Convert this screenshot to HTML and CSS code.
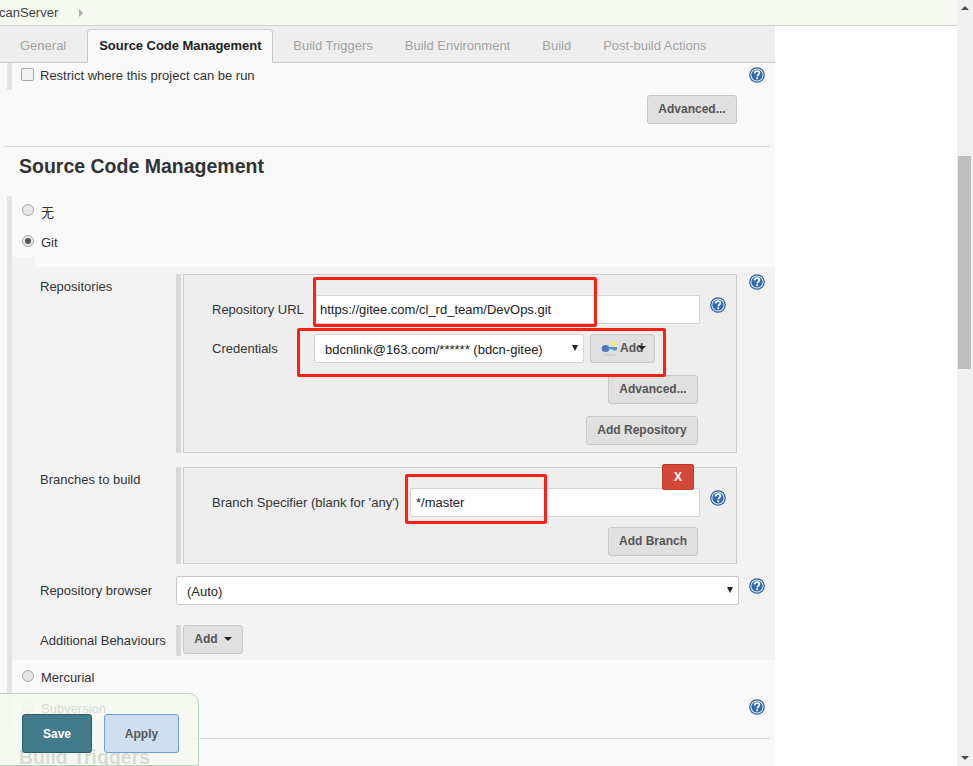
FILE: index.html
```html
<!DOCTYPE html>
<html lang="en">
<head>
  <meta charset="UTF-8">
  <title>canServer Config</title>
  <link rel="stylesheet" href="styles.css">
</head>
<body>
  <svg class="defs" width="0" height="0">
    <symbol id="help" viewBox="0 0 16 16">
      <circle cx="8" cy="8" r="7.8" fill="#2b5c9c"/>
      <circle cx="8" cy="8" r="6.6" fill="#e9f0f8"/>
      <circle cx="8" cy="8" r="5.6" fill="#2f69b0"/>
      <path d="M5.6 6.4c0-1.5 1.1-2.3 2.5-2.3s2.3.8 2.3 2c0 1.7-2.1 1.6-2.1 3.3" fill="none" stroke="#fff" stroke-width="1.7"/>
      <rect x="7.3" y="10.4" width="1.8" height="1.8" fill="#fff"/>
    </symbol>
  </svg>

  <div class="top-bar"><span class="crumb">canServer</span><span class="crumb-arrow"></span></div>

  <div class="page">
    <div class="config">
      <div class="tabs">
        <span class="tab">General</span>
        <span class="tab active">Source Code Management</span>
        <span class="tab">Build Triggers</span>
        <span class="tab">Build Environment</span>
        <span class="tab">Build</span>
        <span class="tab">Post-build Actions</span>
      </div>

      <!-- General (tail end) -->
      <div class="general">
        <div class="restrict">
          <span class="checkbox"></span>
          <span class="opt-label">Restrict where this project can be run</span>
          <svg class="help help-out"><use href="#help"/></svg>
        </div>
        <div class="right-row general-adv"><button class="btn btn-adv">Advanced...</button></div>
      </div>

      <hr class="rule">
      <h2 class="section-title">Source Code Management</h2>

      <div class="scm">
        <div class="radio-row"><span class="radio"></span><span class="opt-label">无</span></div>
        <div class="radio-row row-git"><span class="radio checked"></span><span class="opt-label">Git</span></div>
        <div class="notch"></div>

        <div class="git-block">
          <!-- Repositories -->
          <div class="field-row repo-row">
            <div class="field-label">Repositories</div>
            <div class="box repo-box">
              <div class="inner-row url-row">
                <label class="inner-label">Repository URL</label>
                <div class="input url-input">https://gitee.com/cl_rd_team/DevOps.git</div>
                <svg class="help help-in"><use href="#help"/></svg>
              </div>
              <div class="inner-row cred-row">
                <label class="inner-label">Credentials</label>
                <div class="input select cred-select">bdcnlink@163.com/****** (bdcn-gitee)<span class="caret"></span></div>
                <button class="btn btn-key">
                  <svg class="key" width="18" height="18" viewBox="0 0 18 18">
                    <ellipse cx="9" cy="16" rx="7" ry="1.2" fill="#d2d2d2"/>
                    <ellipse cx="4.5" cy="9.5" rx="3.8" ry="3.6" fill="#4a7ab8"/>
                    <rect x="7" y="8" width="9" height="2.4" fill="#5b8ac6"/>
                    <rect x="12" y="10" width="3.5" height="1.6" fill="#6c96cc"/>
                    <circle cx="13" cy="5" r="2.4" fill="#f6ef5e"/>
                  </svg>Add<span class="menu-caret"></span>
                </button>
              </div>
              <div class="right-row adv-row"><button class="btn btn-adv">Advanced...</button></div>
              <div class="right-row add-repo-row"><button class="btn">Add Repository</button></div>
            </div>
            <svg class="help help-out help-repo"><use href="#help"/></svg>
          </div>

          <!-- Branches -->
          <div class="field-row branch-row">
            <div class="field-label">Branches to build</div>
            <div class="box branch-box">
              <button class="btn-x">X</button>
              <div class="inner-row spec-row">
                <label class="inner-label">Branch Specifier (blank for 'any')</label>
                <div class="input spec-input">*/master</div>
                <svg class="help help-in"><use href="#help"/></svg>
              </div>
              <div class="right-row add-branch-row"><button class="btn btn-adv">Add Branch</button></div>
            </div>
          </div>

          <div class="field-row browser-row">
            <div class="field-label">Repository browser</div>
            <div class="input select browser-select">(Auto)<span class="caret"></span></div>
            <svg class="help help-out help-browser"><use href="#help"/></svg>
          </div>

          <div class="field-row behaviours-row">
            <div class="field-label">Additional Behaviours</div>
            <div class="behaviours"><button class="btn btn-menu">Add<span class="menu-caret"></span></button></div>
          </div>
        </div>

        <div class="radio-row row-hg"><span class="radio"></span><span class="opt-label">Mercurial</span></div>
        <div class="radio-row row-svn"><span class="radio"></span><span class="opt-label">Subversion</span><svg class="help help-out"><use href="#help"/></svg></div>
      </div>

      <hr class="rule rule-low">
      <h2 class="section-title section-low">Build Triggers</h2>

      <!-- red marks drawn over the screenshot -->
      <div class="mark mark-url"></div>
      <div class="mark mark-cred"></div>
      <div class="mark mark-branch"></div>
    </div>

    <div class="side"></div>

    <div class="scrollbar">
      <span class="arrow arrow-up"></span>
      <span class="thumb"></span>
      <span class="arrow arrow-down"></span>
    </div>

    <div class="save-bar">
      <button class="btn-save">Save</button>
      <button class="btn-apply">Apply</button>
    </div>
  </div>
</body>
</html>
```

FILE: styles.css
```css
html, body {
  margin: 0;
  padding: 0;
  height: 766px;
  overflow: hidden;
}

body {
  font-family: "Liberation Sans", Arial, "Noto Sans CJK SC", sans-serif;
  font-size: 13px;
  color: #333;
  background-color: #fff;
}

.defs {
  position: absolute;
}

/* top */
.top-bar {
  width: 957px;
  height: 25px;
  background-color: #f6f9f1;
  border-bottom: 1px solid #d3d3cb;
  display: flex;
  align-items: center;
  color: #444;
  font-size: 13px;
  overflow: hidden;
}

.crumb {
  margin-left: -1px;
}

.crumb-arrow {
  margin-left: 21px;
  border-left: 4px solid #aaa;
  border-top: 4px solid transparent;
  border-bottom: 4px solid transparent;
}

.page {
  display: flex;
  height: 740px;
}

.config {
  position: relative;
  width: 775px;
  height: 740px;
  background-color: #f9f9f9;
  overflow: hidden;
}

.side {
  width: 182px;
  background-color: #fff;
}

/* tabs */
.tabs {
  height: 36px;
  background-color: #eee;
  border-bottom: 1px solid #c8c8c8;
  display: flex;
  align-items: flex-end;
  padding-left: 8px;
}

.tab {
  padding: 0 12px;
  margin-right: 8px;
  height: 33px;
  line-height: 34px;
  color: #a3a3a3;
  font-size: 13px;
}

.tab.active {
  box-sizing: border-box;
  width: 186px;
  height: 34px;
  margin-left: 1px;
  margin-bottom: -1px;
  padding: 0 11px;
  background-color: #f9f9f9;
  border: 1px solid #c8c8c8;
  border-bottom: 1px solid #f9f9f9;
  border-radius: 4px 4px 0 0;
  font-weight: bold;
  color: #222;
  line-height: 32px;
  letter-spacing: -0.05px;
  white-space: nowrap;
}

/* general tail */
.general {
  height: 83px;
}

.restrict {
  display: flex;
  align-items: center;
  height: 27px;
  margin-left: 7px;
  padding-left: 9px;
  padding-bottom: 2px;
  box-sizing: border-box;
  border-left: 5px solid #e4e4e4;
}

.checkbox {
  width: 11px;
  height: 11px;
  background-color: #f2f2f2;
  border: 1px solid #aaa;
  border-radius: 2px;
  margin-right: 6px;
  margin-top: -3px;
}

.opt-label {
  color: #333;
}

.help {
  width: 16px;
  height: 16px;
  display: block;
  flex-shrink: 0;
}

.help-out {
  margin-left: auto;
  margin-right: 10px;
}

.restrict .help-out {
  margin-top: -1px;
}

.right-row {
  display: flex;
  justify-content: flex-end;
}

.general-adv {
  margin-top: 5px;
  padding-right: 38px;
}

/* buttons */
.btn {
  height: 29px;
  padding: 0 11px 2px;
  font-family: inherit;
  font-size: 12px;
  font-weight: bold;
  color: #555;
  background-color: #e0e0e0;
  border: 1px solid #c8c8c8;
  border-radius: 3px;
}

.btn-adv {
  width: 90px;
  padding: 0 0 2px;
}

.rule {
  border: 0;
  border-top: 1px solid #dcdcdc;
  margin: 0 5px 0 4px;
}

.section-title {
  margin: 8px 0 0 19px;
  font-size: 19.5px;
  line-height: 23px;
  color: #333;
}

/* scm */
.scm {
  box-sizing: border-box;
  margin-top: 18px;
  margin-left: 7px;
  padding-top: 4px;
  border-left: 5px solid #e4e4e4;
  height: 528px;
}

.radio-row {
  display: flex;
  align-items: center;
  height: 20px;
}

.radio-row .opt-label {
  margin-top: 3px;
}

.radio {
  width: 10px;
  height: 10px;
  border-radius: 50%;
  background-color: #e6e6e6;
  border: 1px solid #aaa;
  margin-left: 10px;
  margin-right: 7px;
  position: relative;
  flex-shrink: 0;
}

.radio.checked::after {
  content: "";
  position: absolute;
  left: 2px;
  top: 2px;
  width: 6px;
  height: 6px;
  border-radius: 50%;
  background-color: #555;
}

.row-git {
  margin-top: 11px;
}

.notch {
  width: 23px;
  height: 10px;
  margin-top: 6px;
  background-color: #f3f3f3;
}

.git-block {
  width: 763px;
  height: 393px;
  background-color: #f3f3f3;
}

.field-row {
  display: flex;
  padding-left: 28px;
}

.field-label {
  width: 136px;
  flex-shrink: 0;
  color: #333;
}

.box {
  position: relative;
  width: 552px;
  background-color: #eee;
  border: 1px solid #ccc;
}

.box::before {
  content: "";
  position: absolute;
  left: -8px;
  top: -1px;
  bottom: -1px;
  width: 5px;
  background-color: #d8d8d8;
}

.repo-row {
  padding-top: 7px;
}

.repo-row .field-label {
  padding-top: 5px;
}

.repo-box {
  margin-left: 7px;
  height: 177px;
}

.help-repo {
  margin-left: 12px;
  margin-right: 0;
}

.inner-row {
  display: flex;
  align-items: center;
  height: 29px;
  padding-left: 28px;
}

.url-row {
  margin-top: 20px;
}

.cred-row {
  margin-top: 10px;
}

.inner-label {
  color: #333;
}

.url-row .inner-label,
.cred-row .inner-label {
  width: 102px;
  flex-shrink: 0;
}

.input {
  box-sizing: border-box;
  height: 29px;
  line-height: 28px;
  padding-left: 5px;
  background-color: #fff;
  border: 1px solid #d4d4d4;
  border-radius: 2px;
  color: #222;
  font-size: 13px;
}

.url-input {
  width: 386px;
}

.help-in {
  margin-left: 10px;
  margin-top: -10px;
}

.select {
  position: relative;
}

.caret {
  position: absolute;
  right: 5px;
  top: 10px;
  border-top: 6px solid #222;
  border-left: 3px solid transparent;
  border-right: 3px solid transparent;
}

.cred-select {
  width: 270px;
  padding-left: 10px;
  line-height: 29px;
}

.btn-key {
  position: relative;
  width: 65px;
  margin-left: 6px;
  padding: 0 0 2px 29px;
  text-align: left;
  flex-shrink: 0;
}

.key {
  position: absolute;
  left: 10px;
  top: 4px;
}

.menu-caret {
  display: inline-block;
  margin-left: 6px;
  vertical-align: middle;
  border-top: 4px solid #222;
  border-left: 4px solid transparent;
  border-right: 4px solid transparent;
}

.btn-key .menu-caret {
  margin-left: -5px;
}

.adv-row {
  margin-top: 12px;
  padding-right: 38px;
}

.add-repo-row {
  margin-top: 12px;
  padding-right: 38px;
}

.add-repo-row .btn {
  width: 112px;
  padding: 0 0 2px;
}

.branch-row {
  margin-top: 14px;
}

.branch-row .field-label {
  padding-top: 5px;
}

.branch-box {
  margin-left: 7px;
  height: 95px;
}

.btn-x {
  position: absolute;
  right: 42px;
  top: -4px;
  width: 32px;
  height: 26px;
  padding: 0;
  font-family: inherit;
  font-size: 12px;
  font-weight: bold;
  color: #fff;
  background-color: #d24939;
  border: 1px solid #c0392b;
  border-radius: 2px;
}

.spec-row {
  margin-top: 20px;
}

.spec-row .inner-label {
  width: 198px;
  flex-shrink: 0;
}

.spec-input {
  width: 290px;
}

.add-branch-row {
  margin-top: 10px;
  padding-right: 38px;
}

.browser-row {
  margin-top: 12px;
  align-items: center;
}

.browser-select {
  width: 563px;
  padding-left: 10px;
  line-height: 29px;
  border-color: #c8c8c8;
}

.help-browser {
  margin-left: 10px;
  margin-right: 0;
  margin-top: -10px;
}

.behaviours-row {
  margin-top: 20px;
  align-items: center;
}

.behaviours {
  border-left: 5px solid #d8d8d8;
  padding-left: 2px;
  height: 31px;
}

.btn-menu {
  width: 60px;
  padding: 0 0 2px;
}

.row-hg {
  margin-top: 6px;
}

.row-svn {
  margin-top: 11px;
}

.rule-low {
  margin-top: 14px;
}

.section-low {
  margin-top: 7px;
}

/* annotation rectangles */
.mark {
  position: absolute;
  border: 3px solid #ff2015;
  border-radius: 2px;
  box-sizing: border-box;
}

.mark-url {
  left: 313px;
  top: 251px;
  width: 284px;
  height: 50px;
}

.mark-cred {
  left: 297px;
  top: 302px;
  width: 369px;
  height: 49px;
}

.mark-branch {
  left: 405px;
  top: 448px;
  width: 142px;
  height: 50px;
}

/* scrollbar */
.scrollbar {
  position: absolute;
  right: 0;
  top: 0;
  width: 16px;
  height: 766px;
  background-color: #f1f1f1;
}

.thumb {
  position: absolute;
  left: 1px;
  top: 156px;
  width: 14px;
  height: 213px;
  background-color: #bdbdbd;
  border-right: 1px solid #f1f1f1;
  box-sizing: border-box;
}

.arrow {
  position: absolute;
  left: 4px;
  border-left: 4px solid transparent;
  border-right: 4px solid transparent;
}

.arrow-up {
  top: 6px;
  border-bottom: 4px solid #505050;
}

.arrow-down {
  bottom: 6px;
  border-top: 4px solid #505050;
}

/* floating save bar */
.save-bar {
  position: absolute;
  left: -1px;
  top: 693px;
  width: 200px;
  height: 73px;
  box-sizing: border-box;
  padding: 20px 0 0 22px;
  display: flex;
  gap: 12px;
  align-items: flex-start;
  background-color: rgba(245, 249, 240, 0.85);
  border: 1px solid #b4d8bd;
  border-radius: 0 10px 0 0;
}

.btn-save,
.btn-apply {
  height: 39px;
  padding: 0;
  font-family: inherit;
  font-size: 12px;
  font-weight: bold;
  border-radius: 3px;
}

.btn-save {
  width: 70px;
  color: #fff;
  background-color: #437a8c;
  border: 1px solid #2f5a68;
}

.btn-apply {
  width: 75px;
  color: #555;
  background-color: #cddff0;
  border: 1px solid #6b9fd6;
}
```
